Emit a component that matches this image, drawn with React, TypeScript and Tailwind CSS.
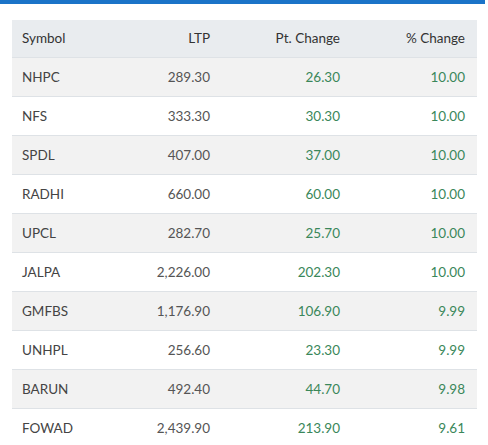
import * as React from "react";

type Row = {
    symbol: string;
    ltp: string;
    change: string;
    percent: string;
}

const rows: Row[] = [
    {symbol: "NHPC", ltp: "289.30", change: "26.30", percent: "10.00"},
    {symbol: "NFS", ltp: "333.30", change: "30.30", percent: "10.00"},
    {symbol: "SPDL", ltp: "407.00", change: "37.00", percent: "10.00"},
    {symbol: "RADHI", ltp: "660.00", change: "60.00", percent: "10.00"},
    {symbol: "UPCL", ltp: "282.70", change: "25.70", percent: "10.00"},
    {symbol: "JALPA", ltp: "2,226.00", change: "202.30", percent: "10.00"},
    {symbol: "GMFBS", ltp: "1,176.90", change: "106.90", percent: "9.99"},
    {symbol: "UNHPL", ltp: "256.60", change: "23.30", percent: "9.99"},
    {symbol: "BARUN", ltp: "492.40", change: "44.70", percent: "9.98"},
    {symbol: "FOWAD", ltp: "2,439.90", change: "213.90", percent: "9.61"},
];

const cols = "grid grid-cols-[88px_122px_130px_125px]";

export default function App() {
    return (
        <div className="w-[488px] h-[445px] overflow-hidden bg-white font-['Lato',sans-serif] text-[13.5px]">
            <div className="h-[4px] w-[485px] bg-[#1a73c8]"/>
            <div className="mt-[16px] ml-[12px] w-[465px]">
                <div className={`${cols} h-[38px] items-center bg-[#e9ecef] text-[#333] border-b border-[#dee2e6]`}>
                    <span className="pl-[10px]">Symbol</span>
                    <span className="text-right pr-[12px]">LTP</span>
                    <span className="text-right pr-[12px]">Pt. Change</span>
                    <span className="text-right pr-[12px]">% Change</span>
                </div>
                {rows.map((row, i) => (
                    <div key={row.symbol}
                         className={`${cols} h-[39px] items-center border-b border-[#dee2e6] ${i % 2 === 0 ? "bg-[#f2f2f2]" : "bg-white"}`}>
                        <span className="pl-[10px] text-[#444]">{row.symbol}</span>
                        <span className="text-right pr-[12px] text-[#555]">{row.ltp}</span>
                        <span className="text-right pr-[12px] text-[#3a875a]">{row.change}</span>
                        <span className="text-right pr-[12px] text-[#3a875a]">{row.percent}</span>
                    </div>
                ))}
            </div>
        </div>
    )
}
